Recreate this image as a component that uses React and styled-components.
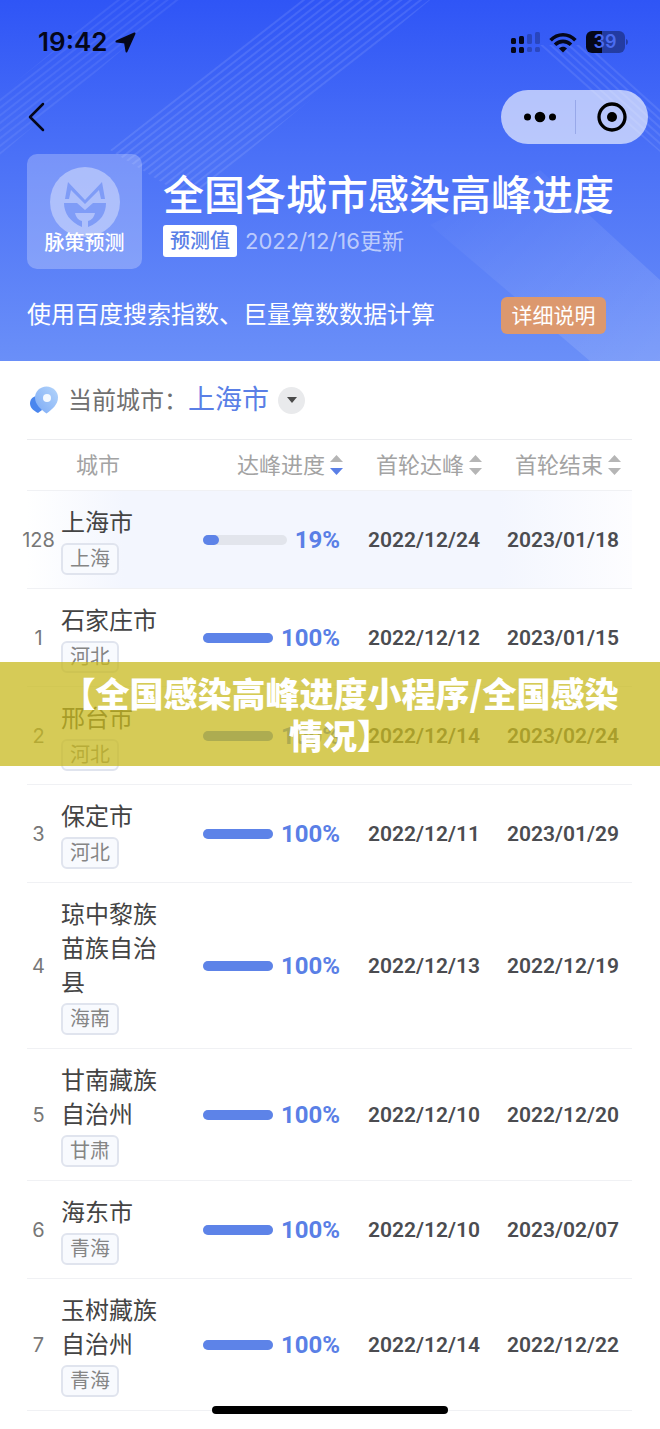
import React from 'react';
import styled, {createGlobalStyle} from 'styled-components';

const GlobalStyle = createGlobalStyle`
    *{
        box-sizing: border-box;
    }
    body{
        margin: 0;
        background-color: white;
        font-family: Inter, "Noto Sans CJK SC", sans-serif;
    }
    button{
        font-family: inherit;
        border: none;
        padding: 0;
        background: none;
        cursor: pointer;
    }
`;

const Page = styled.div`
    position: relative;
    padding-bottom: 17px;
`;

const Hero = styled.header`
    position: relative;
    z-index: 0;
    padding-bottom: 27px;
    background-image: linear-gradient(180deg, #2f55f6 0%, #4a70f7 42%, #6a8ff8 100%);
    color: white;
`;

const Backdrop = styled.svg`
    position: absolute;
    top: 0;
    left: 0;
    z-index: -1;
    width: 100%;
    height: 100%;
`;

const StatusBar = styled.div`
    display: flex;
    align-items: center;
    justify-content: space-between;
    height: 84px;
    padding: 0 31px 0 38px;
    color: #05071a;
`;

const StatusGroup = styled.div`
    display: flex;
    align-items: center;
    gap: ${props => props.gap};
`;

const Time = styled.span`
    font-size: 26px;
    font-weight: 600;
    line-height: 32px;
`;

const NavBar = styled.nav`
    display: flex;
    align-items: center;
    justify-content: space-between;
    height: 66px;
    padding: 0 12px 0 26px;
`;

const BackButton = styled.button`
    display: flex;
    color: #05071a;
`;

const Capsule = styled.div`
    display: flex;
    align-items: center;
    width: 147px;
    height: 54px;
    border-radius: 27px;
    background-color: rgba(255,255,255,.62);
`;

const CapsuleButton = styled.button`
    display: flex;
    align-items: center;
    justify-content: center;
    width: 50%;
    height: 34px;
    padding-left: 4px;
    & + &{
        padding-left: 0;
        border-left: 1px solid rgba(80,100,190,.3);
    }
`;

const Intro = styled.div`
    display: flex;
    gap: 21px;
    padding: 4px 27px 0;
`;

const Brand = styled.div`
    display: flex;
    flex-direction: column;
    align-items: center;
    flex-shrink: 0;
    width: 115px;
    height: 115px;
    padding-top: 13px;
    border-radius: 10px;
    background-color: rgba(255,255,255,.25);
`;

const BrandName = styled.span`
    margin-top: -10px;
    font-size: 20px;
    font-weight: 500;
    line-height: 32px;
`;

const Title = styled.h1`
    margin: 16px 0 5px;
    font-size: 41px;
    font-weight: 500;
    line-height: 50px;
    white-space: nowrap;
`;

const Meta = styled.div`
    display: flex;
    align-items: center;
    gap: 8px;
`;

const Forecast = styled.span`
    padding: 0 7px;
    border-radius: 3px;
    background-color: white;
    color: #5a7fe6;
    font-size: 20px;
    font-weight: 500;
    line-height: 32px;
`;

const Updated = styled.span`
    color: rgba(255,255,255,.62);
    font-size: 22px;
    line-height: 32px;
`;

const Source = styled.div`
    display: flex;
    align-items: center;
    justify-content: space-between;
    padding: 27px 54px 0 27px;
    font-size: 24px;
    line-height: 38px;
`;

const DetailButton = styled.button`
    width: 105px;
    border-radius: 6px;
    background-color: #dc986e;
    color: white;
    font-size: 21px;
    line-height: 37px;
`;

const Main = styled.main`
    padding: 0 28px 0 27px;
`;

const CurrentCity = styled.div`
    display: flex;
    align-items: center;
    height: 78px;
    padding-left: 2px;
`;

const CityLabel = styled.span`
    margin-left: 9px;
    padding-bottom: 4px;
    color: #707070;
    font-size: 24px;
`;

const CityName = styled.span`
    padding-bottom: 6px;
    color: #5a7fe6;
    font-size: 27px;
`;

const CityButton = styled.button`
    display: flex;
    align-items: center;
    justify-content: center;
    width: 27px;
    height: 27px;
    margin-left: 9px;
    border-radius: 50%;
    background-color: #e9eaec;
`;

const Table = styled.table`
    width: 100%;
    table-layout: fixed;
    border-spacing: 0;
`;

const Head = styled.th`
    width: ${props => props.w || 'auto'};
    height: 52px;
    padding: 0 ${props => props.end || '0'} 4px 0;
    border-top: 1px solid #ebecef;
    border-bottom: 1px solid #f0f1f4;
    color: #a3a3a3;
    font-size: 22px;
    font-weight: 400;
    text-align: left;
`;

const HeadName = styled.span`
    padding-left: 15px;
`;

const SortButton = styled.button`
    display: flex;
    align-items: center;
    gap: 5px;
    margin-left: auto;
    color: inherit;
    font-size: 22px;
    white-space: nowrap;
    svg{
        margin-top: 4px;
    }
`;

const Row = styled.tr`
    background-image: ${props => props.active ? 'linear-gradient(90deg, #fff 0%, #f3f6fe 16%, #f3f6fe 78%, #fdfdff 100%)' : 'none'};
`;

const Cell = styled.td`
    padding: 0;
    border-bottom: 1px solid #f0f1f4;
`;

const Rank = styled.div`
    display: flex;
    justify-content: center;
    width: 23px;
    color: #777;
    font-size: 20px;
`;

const NameCell = styled(Cell)`
    padding: 15px 38px 13px 0;
`;

const Name = styled.div`
    color: #444;
    font-size: 24px;
    line-height: 34px;
`;

const Province = styled.span`
    display: block;
    width: fit-content;
    margin-top: 3px;
    padding: 0 7px;
    border: 2px solid #e0e4ee;
    border-radius: 6px;
    background-color: #f8fafe;
    color: #858585;
    font-size: 20px;
    line-height: 28px;
`;

const Progress = styled.div`
    display: flex;
    align-items: center;
    gap: 8px;
    padding-right: 3px;
`;

const Track = styled.div`
    flex: 1;
    height: 10px;
    border-radius: 5px;
    background-color: #e2e5ec;
`;

const Fill = styled.div`
    height: 10px;
    border-radius: 5px;
    background-color: #5d83e8;
`;

const Percent = styled.span`
    color: #5a7fe6;
    font-family: Roboto, sans-serif;
    font-size: 24px;
    font-weight: 700;
    line-height: 30px;
`;

const DateCell = styled(Cell)`
    padding-right: ${props => props.end || '2px'};
    color: #4b4c50;
    font-family: Roboto, sans-serif;
    font-size: 21px;
    font-weight: 600;
    text-align: right;
`;

const Banner = styled.div`
    position: absolute;
    top: 662px;
    left: 0;
    right: 0;
    padding: 10px 36px 10px 56px;
    background-color: rgba(200,186,31,.75);
    color: white;
    font-family: "Noto Sans CJK SC", sans-serif;
    font-size: 34px;
    font-weight: 900;
    line-height: 42px;
    text-align: center;
`;

const HomeIndicator = styled.div`
    position: absolute;
    bottom: 14px;
    left: 50%;
    width: 236px;
    height: 8px;
    margin-left: -118px;
    border-radius: 4px;
    background-color: black;
`;

const cities = [
    {rank: 128, name: '上海市', province: '上海', percent: 19, peak: '2022/12/24', end: '2023/01/18', active: true},
    {rank: 1, name: '石家庄市', province: '河北', percent: 100, peak: '2022/12/12', end: '2023/01/15'},
    {rank: 2, name: '邢台市', province: '河北', percent: 100, peak: '2022/12/14', end: '2023/02/24'},
    {rank: 3, name: '保定市', province: '河北', percent: 100, peak: '2022/12/11', end: '2023/01/29'},
    {rank: 4, name: '琼中黎族苗族自治县', province: '海南', percent: 100, peak: '2022/12/13', end: '2022/12/19'},
    {rank: 5, name: '甘南藏族自治州', province: '甘肃', percent: 100, peak: '2022/12/10', end: '2022/12/20'},
    {rank: 6, name: '海东市', province: '青海', percent: 100, peak: '2022/12/10', end: '2023/02/07'},
    {rank: 7, name: '玉树藏族自治州', province: '青海', percent: 100, peak: '2022/12/14', end: '2022/12/22'},
];

// Fine diagonal stripes and one soft beam behind the header
const HeroBackdrop = () => (
    <Backdrop viewBox="0 0 660 361" preserveAspectRatio="none" aria-hidden="true">
        <defs>
            <pattern id="rise" width="6" height="6" patternUnits="userSpaceOnUse" patternTransform="rotate(-38)">
                <rect width="6" height="2" fill="#fff"/>
            </pattern>
            <pattern id="fall" width="6" height="6" patternUnits="userSpaceOnUse" patternTransform="rotate(42)">
                <rect width="6" height="2" fill="#fff"/>
            </pattern>
            <linearGradient id="beam" x1="0" y1="0" x2="1" y2="1">
                <stop offset="0" stopColor="#fff" stopOpacity="0"/>
                <stop offset="1" stopColor="#fff" stopOpacity=".14"/>
            </linearGradient>
        </defs>
        <path d="M0 95 115 0h65L0 155z" fill="url(#rise)" opacity=".07"/>
        <path d="M110 150 300 0h130L190 200z" fill="url(#rise)" opacity=".1"/>
        <path d="M535 45h55l70 62v45z" fill="url(#fall)" opacity=".09"/>
        <path d="M430 225 540 170 660 280v81h-70z" fill="url(#beam)"/>
    </Backdrop>
);

const LocationIcon = () => (
    <svg width="21" height="21" viewBox="0 0 21 21" fill="currentColor" stroke="currentColor" strokeWidth="2" strokeLinejoin="round">
        <path d="M19.500 1.500 1.500 9.500l8.500.9 1.500 9z"/>
    </svg>
);

const SignalIcon = () => (
    <svg width="29" height="22" viewBox="0 0 29 22" fill="currentColor">
        <rect x="0" y="7" width="5" height="6" rx="1.5"/>
        <rect x="8" y="5" width="5" height="8" rx="1.5"/>
        <rect x="0" y="16" width="5" height="6" rx="1.5"/>
        <rect x="8" y="16" width="5" height="6" rx="1.5"/>
        <g opacity=".25">
            <rect x="16" y="3" width="5" height="10" rx="1.5"/>
            <rect x="24" y="1" width="5" height="12" rx="1.5"/>
            <rect x="16" y="16" width="5" height="5" rx="1.5"/>
            <rect x="24" y="16" width="5" height="5" rx="1.5"/>
        </g>
    </svg>
);

const WifiIcon = () => (
    <svg width="28" height="21" viewBox="0 0 28 21" fill="none" stroke="currentColor" strokeWidth="3.6">
        <path d="M1.6 8.2C8.6.9 19.4.9 26.4 8.2"/>
        <path d="M6 12.8c4.6-4.6 11.4-4.6 16 0"/>
        <path d="M14 20.500l-4-4c2.200-2.200 5.800-2.200 8 0z" fill="currentColor" stroke="none"/>
    </svg>
);

const BatteryIcon = () => (
    <svg width="43" height="22" viewBox="0 0 43 22">
        <path d="M6 0h10v22H6a6 6 0 0 1-6-6V6a6 6 0 0 1 6-6z" fill="#05071a"/>
        <path d="M16 0h17a6 6 0 0 1 6 6v10a6 6 0 0 1-6 6H16z" fill="#05071a" fillOpacity=".38"/>
        <path d="M40 8c2.500.5 2.500 5.500 0 6z" fill="#05071a" fillOpacity=".38"/>
        <text x="19" y="17" fill="#4b6cf0" fontSize="18" fontWeight="600" textAnchor="middle">39</text>
    </svg>
);

const BackIcon = () => (
    <svg width="20" height="30" viewBox="0 0 20 30" fill="none" stroke="currentColor" strokeWidth="2.500" strokeLinecap="round" strokeLinejoin="round">
        <path d="M17 2 4 15l13 13"/>
    </svg>
);

const MoreIcon = () => (
    <svg width="32" height="12" viewBox="0 0 32 12" fill="#000">
        <circle cx="3.500" cy="6" r="3.500"/>
        <circle cx="16" cy="6" r="5.300"/>
        <circle cx="28.500" cy="6" r="3.500"/>
    </svg>
);

const TargetIcon = () => (
    <svg width="30" height="30" viewBox="0 0 30 30">
        <circle cx="15" cy="15" r="13" fill="none" stroke="#000" strokeWidth="3.300"/>
        <circle cx="15" cy="15" r="5" fill="#000"/>
    </svg>
);

const BrandLogo = () => (
    <svg width="70" height="70" viewBox="0 0 70 70">
        <circle cx="35" cy="35" r="35" fill="#fff" fillOpacity=".38"/>
        <g fill="#7f9cf7">
            <path d="M18 15 35 33 52 15 55 32h-4l-2-9-14 14-14-14-2 9h-4z"/>
            <path d="M14 36h13l8 7 8-7h13c0 10-5 19-18 24v-6c4-1 6-4 7-8H25c1 4 3 7 7 8v6C20 55 14 46 14 36z"/>
        </g>
    </svg>
);

const PinIcon = () => (
    <svg width="30" height="28" viewBox="0 0 30 28">
        <defs>
            <linearGradient id="pin" x1="1" y1="0" x2="0" y2="1">
                <stop offset="0" stopColor="#b4d5fb"/>
                <stop offset="1" stopColor="#7caaf5"/>
            </linearGradient>
        </defs>
        <path d="M9 10c-5 0-8 3-8 7.500C1 22 5 25 9 27l4-3z" fill="#4a86ee"/>
        <path d="M17.500.5C24 .5 29 5.500 29 11.500c0 7-6 12-11.500 16C12 23.500 6 18.500 6 11.500 6 5.500 11 .5 17.500.5z" fill="url(#pin)"/>
        <circle cx="18" cy="12" r="4" fill="#f4f9ff"/>
    </svg>
);

const CaretIcon = () => (
    <svg width="10" height="6" viewBox="0 0 10 6" fill="#4a4a4a">
        <path d="M0 0h10L5 6z"/>
    </svg>
);

const SortIcon = ({down}) => (
    <svg width="13" height="20" viewBox="0 0 13 20">
        <path d="M6.500 0 13 7H0z" fill="#b5b5b5"/>
        <path d="M0 13h13l-6.500 7z" fill={down ? '#5a7fe6' : '#b5b5b5'}/>
    </svg>
);

const SortHead = ({title, w, end, down}) => (
    <Head w={w} end={end} scope="col">
        <SortButton>{title}<SortIcon down={down}/></SortButton>
    </Head>
);

const CityRow = ({rank, name, province, percent, peak, end, active}) => (
    <Row active={active}>
        <Cell><Rank>{rank}</Rank></Cell>
        <NameCell>
            <Name>{name}</Name>
            <Province>{province}</Province>
        </NameCell>
        <Cell>
            <Progress>
                <Track><Fill style={{width: `${percent}%`}}/></Track>
                <Percent>{percent}%</Percent>
            </Progress>
        </Cell>
        <DateCell>{peak}</DateCell>
        <DateCell end="13px">{end}</DateCell>
    </Row>
);

const App = () => (
    <Page>
        <GlobalStyle/>
        <Hero>
            <HeroBackdrop/>
            <StatusBar>
                <StatusGroup gap="8px">
                    <Time>19:42</Time>
                    <LocationIcon/>
                </StatusGroup>
                <StatusGroup gap="9px">
                    <SignalIcon/>
                    <WifiIcon/>
                    <BatteryIcon/>
                </StatusGroup>
            </StatusBar>
            <NavBar>
                <BackButton aria-label="返回"><BackIcon/></BackButton>
                <Capsule>
                    <CapsuleButton aria-label="更多"><MoreIcon/></CapsuleButton>
                    <CapsuleButton aria-label="关闭"><TargetIcon/></CapsuleButton>
                </Capsule>
            </NavBar>
            <Intro>
                <Brand>
                    <BrandLogo/>
                    <BrandName>脉策预测</BrandName>
                </Brand>
                <div>
                    <Title>全国各城市感染高峰进度</Title>
                    <Meta>
                        <Forecast>预测值</Forecast>
                        <Updated>2022/12/16更新</Updated>
                    </Meta>
                </div>
            </Intro>
            <Source>
                <span>使用百度搜索指数、巨量算数数据计算</span>
                <DetailButton>详细说明</DetailButton>
            </Source>
        </Hero>
        <Main>
            <CurrentCity>
                <PinIcon/>
                <CityLabel>当前城市：</CityLabel>
                <CityName>上海市</CityName>
                <CityButton aria-label="切换城市"><CaretIcon/></CityButton>
            </CurrentCity>
            <Table>
                <thead>
                    <tr>
                        <Head w="34px"/>
                        <Head scope="col"><HeadName>城市</HeadName></Head>
                        <SortHead title="达峰进度" w="140px" down/>
                        <SortHead title="首轮达峰" w="139px"/>
                        <SortHead title="首轮结束" w="150px" end="11px"/>
                    </tr>
                </thead>
                <tbody>
                    {cities.map(city => <CityRow key={city.rank} {...city}/>)}
                </tbody>
            </Table>
        </Main>
        <Banner>【全国感染高峰进度小程序/全国感染情况】</Banner>
        <HomeIndicator/>
    </Page>
);

export default App;
